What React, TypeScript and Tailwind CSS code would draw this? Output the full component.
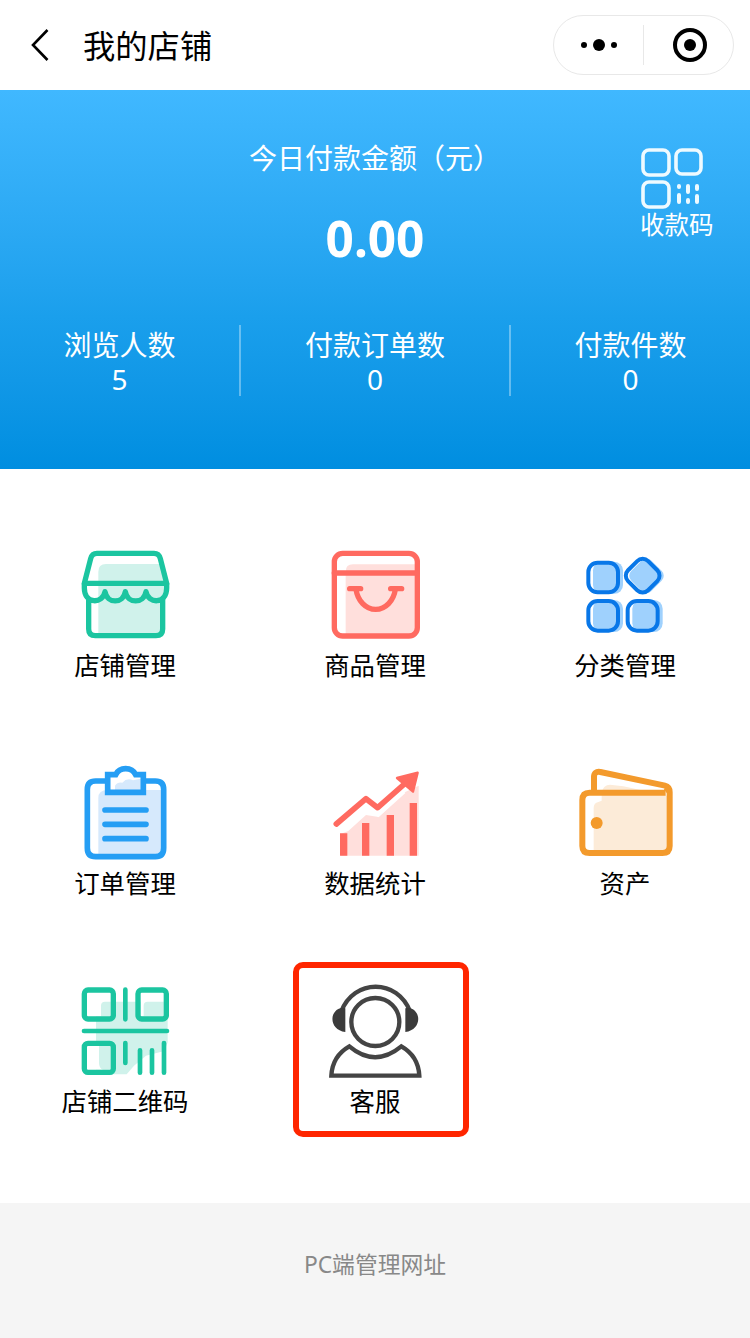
import React from "react";

const ShopIcon = () => (
  <svg viewBox="0 0 300 300" className="size-[100px]" fill="none">
    <path d="M70 272V80q0-23 23-23h160l22 60-12 45v110z" fill="#d0f2eb" />
    <g stroke="#1bc5a0" strokeWidth="16" strokeLinejoin="round">
      <path d="M28 115 47 41q4-16 19-16h171q15 0 19 16l19 74z" />
      <path d="M28 115v14c0 50 56 48 62 11 7 37 54 37 61 0 7 37 55 37 62 0 6 37 62 39 62-11v-14" />
      <path d="M41 158v94q0 20 20 20h182q20 0 20-20v-94" />
    </g>
  </svg>
);

const GoodsIcon = () => (
  <svg viewBox="0 0 300 300" className="size-[100px]" fill="none">
    <path d="M62 272V80q0-22 22-22h192v214z" fill="#ffdfdc" />
    <g stroke="#ff6a60" strokeWidth="16" strokeLinecap="round">
      <rect x="28" y="25" width="249" height="248" rx="25" />
      <path d="M28 84h249M74 131h33M197 131h33" />
      <path d="M93 133c5 34 29 60 59 60s54-26 59-60" />
    </g>
  </svg>
);

const CategoryIcon = () => (
  <svg viewBox="0 0 300 300" className="size-[100px]" fill="none">
    <g fill="#9fd1fd">
      <rect x="54" y="50" width="90" height="96" rx="26" />
      <rect x="54" y="165" width="90" height="96" rx="26" />
      <rect x="172" y="165" width="91" height="96" rx="26" />
      <rect x="172" y="50" width="85" height="85" rx="20" transform="rotate(45 214.500 92.500)" />
    </g>
    <g stroke="#0877e8" strokeWidth="12">
      <rect x="40" y="53" width="89" height="89" rx="28" />
      <rect x="40" y="168" width="89" height="89" rx="28" />
      <rect x="158" y="168" width="90" height="89" rx="28" />
      <rect x="160.500" y="49.500" width="85" height="85" rx="23" transform="rotate(45 203 92)" />
    </g>
  </svg>
);

const OrderIcon = () => (
  <svg viewBox="0 0 300 300" className="size-[100px]" fill="none">
    <path d="M70 280V105q0-24 28-24h168v199z" fill="#d6e9fc" />
    <path d="M98 88V35h107v53z" fill="#fff" />
    <path d="M120 68q8-12 22-9 14-16 32-7l31-6v42h-85z" fill="#d6e9fc" />
    <g stroke="#259ef4" strokeWidth="17">
      <path d="M98 54H62q-25 0-25 25v176q0 26 25 26h179q25 0 25-26V79q0-25-25-25h-36" />
      <path d="M98 88V35h24c12-24 48-24 60 0h23v53z" />
      <path d="M90 141h123M90 184h123M90 227h123" strokeLinecap="round" />
    </g>
  </svg>
);

const StatsIcon = () => (
  <svg viewBox="0 0 300 300" className="size-[100px]" fill="none">
    <path d="M48 278v-66l22-8 53-48 38 6 78-74 42-20v210z" fill="#ffdfdc" />
    {/* separación blanca bajo la línea de tendencia */}
    <path d="m50 196 73-67 37 27 78-70" stroke="#fff" strokeWidth="10" />
    <g fill="#ff6a60">
      <path d="M45 211h22v67H45zM111 180h22v98h-22zM185 156h22v122h-22zM254 120h22v158h-22z" />
      <path d="m216 45 62-16-14 57z" stroke="#ff6a60" strokeWidth="7" strokeLinejoin="round" />
    </g>
    <path d="m34 183 89-76 35 27 87-77" stroke="#ff6a60" strokeWidth="17" strokeLinecap="round" strokeLinejoin="round" />
  </svg>
);

const WalletIcon = () => (
  <svg viewBox="0 0 300 300" className="size-[100px]" fill="none">
    <path d="M56 268V135q0-15 14-18l10-4V88q5-22 25-23l40 5 138 30v168z" fill="#fcebd8" />
    <g stroke="#f39a2c" strokeWidth="18" strokeLinejoin="round">
      <path d="M272 89H44q-22 0-22 22v138q0 21 22 21h218q22 0 22-21V88q0-17-14-20L76 27q-19-3-19 15v47" />
      <path d="M272 86q4-3 7-10" />
    </g>
    <circle cx="65" cy="180" r="18" fill="#f39a2c" />
  </svg>
);

const QrIcon = () => (
  <svg viewBox="0 0 300 300" className="size-[100px]" fill="none">
    <path d="M63 280V72q0-10 10-10h205v122l-10 26-55 14-36 30-22 26z" fill="#d0f2eb" />
    <path d="M36 35h71v71H36zM197 35h69v71h-69zM36 195h71v71H36z" fill="#fff" />
    <path d="M78 106V74q0-12 12-12h17v44zM206 106V74q0-12 12-12h48v44zM72 195h35v71H84q-12-4-12-20z" fill="#d0f2eb" />
    <g stroke="#1bc5a0" strokeWidth="16">
      <rect x="28" y="27" width="87" height="87" rx="11" />
      <rect x="189" y="27" width="85" height="87" rx="11" />
      <rect x="28" y="187" width="87" height="87" rx="11" />
    </g>
    <g stroke="#1bc5a0" strokeWidth="14" strokeLinecap="round">
      <path d="M151 26v89M27 150h249M151 186v60M195 208v67M231 208v67M267 186v89" />
    </g>
  </svg>
);

const ServiceIcon = () => (
  <svg viewBox="0 0 300 300" className="size-[100px]" fill="none">
    <g stroke="#444" strokeWidth="13">
      <circle cx="151" cy="123" r="72" />
      <path d="M48 93c38-101 170-101 208 0" />
      <path d="M19 284q3-59 54-88 77 65 156 0 51 29 54 88z" />
    </g>
    <path d="M61 82v71c-50-7-50-67-9-73zM241 82v71c50-7 50-67 9-73z" fill="#3b3b3b" />
  </svg>
);

const PayCodeIcon = () => (
  <svg viewBox="0 0 64 64" className="size-16" fill="none" stroke="#eefaff" strokeWidth="3.600">
    <rect x="3" y="4" width="26" height="25" rx="6" />
    <rect x="36" y="4" width="25" height="24" rx="6" />
    <rect x="3" y="36" width="26" height="25" rx="6" />
    <path d="M39 40v1M39 49v7M48 40v6M48 54v2M57 40v3M57 50v6" strokeWidth="4" strokeLinecap="round" />
  </svg>
);

const stats = [
  { label: "浏览人数", value: 5 },
  { label: "付款订单数", value: 0 },
  { label: "付款件数", value: 0 },
];

const menu = [
  { label: "店铺管理", icon: <ShopIcon /> },
  { label: "商品管理", icon: <GoodsIcon /> },
  { label: "分类管理", icon: <CategoryIcon /> },
  { label: "订单管理", icon: <OrderIcon /> },
  { label: "数据统计", icon: <StatsIcon /> },
  { label: "资产", icon: <WalletIcon /> },
  { label: "店铺二维码", icon: <QrIcon /> },
  { label: "客服", icon: <ServiceIcon />, active: true },
];

const Header = () => (
  <header className="flex h-[90px] items-center justify-between bg-white pr-4 pl-[30px]">
    <div className="flex items-center">
      <svg viewBox="0 0 20 32" className="h-8 w-5" fill="none" stroke="#000" strokeWidth="2.600">
        <path d="M17.500 1 3 16l14.500 15" />
      </svg>
      <h1 className="ml-[33px] pt-px text-[32.300px] leading-none">我的店铺</h1>
    </div>
    {/* Cápsula del mini programa */}
    <div className="flex h-[60px] w-[181px] items-center rounded-full border border-[#e8e8e8]">
      <div className="flex flex-1 items-center justify-center gap-[6px]">
        <span className="size-[6px] rounded-full bg-black" />
        <span className="size-3 rounded-full bg-black" />
        <span className="size-[6px] rounded-full bg-black" />
      </div>
      <span className="h-10 w-px bg-[#e8e8e8]" />
      <div className="flex flex-1 items-center justify-center">
        <span className="mr-px ml-[3px] flex size-[34px] items-center justify-center rounded-full border-4 border-black">
          <span className="size-3 rounded-full bg-black" />
        </span>
      </div>
    </div>
  </header>
);

const Summary = () => (
  <section className="relative h-[379px] bg-linear-to-b from-[#40b8ff] via-[#1a9fec] via-60% to-[#008ee0] pt-[49px] text-white">
    <p className="pl-[249px] text-[28px] leading-[38px]">今日付款金额（元）</p>
    <p className="mt-[31px] text-center text-[49.500px] leading-[60px] font-bold">0.00</p>
    <button type="button" className="absolute top-[56px] right-[36px] flex w-[74px] flex-col items-start">
      <PayCodeIcon />
      <span className="text-[24.500px] leading-[30px]">收款码</span>
    </button>
    <div className="mt-[57px] grid h-[70px] grid-cols-[241px_270px_239px] divide-x-2 divide-white/35">
      {stats.map((s) => (
        <div key={s.label} className="flex flex-col items-center pt-[3px] text-[28px] leading-[34px]">
          <span>{s.label}</span>
          <span>{s.value}</span>
        </div>
      ))}
    </div>
  </section>
);

export default function App() {
  return (
    <div className="flex h-[1338px] w-[750px] flex-col overflow-hidden bg-white font-['Noto_Sans','Noto_Sans_CJK_SC',sans-serif] text-black">
      <Header />
      <Summary />
      <main className="grid flex-1 auto-rows-[218px] grid-cols-3 pt-[76px]">
        {menu.map((item) => (
          <div key={item.label} className="relative flex flex-col items-center">
            {item.icon}
            <span className="text-[25.400px] leading-[40px]">{item.label}</span>
            {item.active && (
              <span className="absolute -top-[19px] left-[43px] h-[175px] w-[176px] rounded-[10px] border-[6px] border-[#ff2600]" />
            )}
          </div>
        ))}
      </main>
      <footer className="flex h-[135px] items-center justify-center bg-[#f5f5f5] pb-[10px] text-[22.800px] text-[#888]">
        PC端管理网址
      </footer>
    </div>
  );
}
